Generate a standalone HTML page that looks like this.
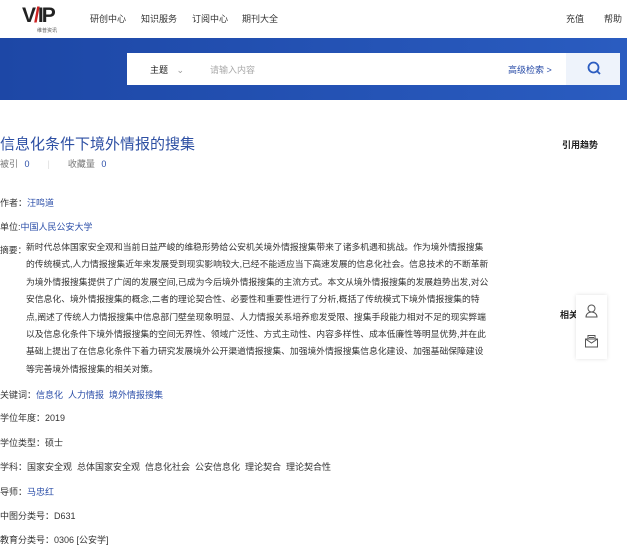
<!DOCTYPE html>
<html><head><meta charset="utf-8"><style>
*{margin:0;padding:0;box-sizing:border-box}
body{width:627px;height:543px;overflow:hidden;background:#fff;font-family:"Liberation Sans","Noto Sans CJK SC",sans-serif;font-size:9px;color:#333;position:relative}
.a{position:absolute;white-space:nowrap}
.b{color:#2b4ea8}
.hdr{position:absolute;left:0;top:0;width:627px;height:38px;background:#fff}
.band{position:absolute;left:0;top:38px;width:627px;height:62px;background:linear-gradient(90deg,#1d47a6,#2a5cc0)}
.sb{position:absolute;left:127px;top:53px;width:439px;height:32px;background:#fff}
.btn{position:absolute;left:566px;top:53px;width:54px;height:32px;background:#eef3fb}
.abs{position:absolute;left:26px;top:239px;line-height:17.4px;font-size:8.8px;color:#333;white-space:nowrap}
</style></head><body>
<div class="hdr"></div>
<div class="a" style="left:22px;top:4px;font:900 21px 'Liberation Sans',sans-serif;color:#222;letter-spacing:-2px">V<span style="color:#c22">/</span>IP</div>
<div class="a" style="left:37px;top:27px;font-size:5px;color:#555">维普资讯</div>
<div class="a" style="left:90px;top:12px">研创中心</div>
<div class="a" style="left:141px;top:12px">知识服务</div>
<div class="a" style="left:192px;top:12px">订阅中心</div>
<div class="a" style="left:242px;top:12px">期刊大全</div>
<div class="a" style="left:566px;top:12px">充值</div>
<div class="a" style="left:604px;top:12px">帮助</div>
<div class="band"></div>
<div class="sb"></div>
<div class="a" style="left:150px;top:63px;color:#222">主题 <span style="color:#999;margin-left:6px">⌄</span></div>
<div class="a" style="left:210px;top:63px;color:#aaa">请输入内容</div>
<div class="a" style="left:508px;top:63px;color:#2b4ea8">高级检索 &gt;</div>
<div class="btn"></div>
<svg class="a" style="left:587px;top:61px" width="14" height="15" viewBox="0 0 14 15"><circle cx="6.5" cy="6.5" r="5" fill="none" stroke="#2b5cc0" stroke-width="1.8"/><path d="M10 10l3 3" stroke="#2b5cc0" stroke-width="1.8"/></svg>
<div class="a" style="left:0;top:133px;font-size:15px;color:#2d4fa3">信息化条件下境外情报的搜集</div>
<div class="a" style="left:0;top:157px;color:#777">被引 <span class="b" style="margin-left:4px">0</span><span style="margin:0 18px;color:#ddd">|</span>收藏量 <span class="b" style="margin-left:4px">0</span></div>
<div class="a" style="left:562px;top:138px;font-weight:bold;color:#222">引用趋势</div>
<div class="a" style="left:0;top:196px">作者：<span class="b">汪鸣道</span></div>
<div class="a" style="left:0;top:220px">单位:<span class="b">中国人民公安大学</span></div>
<div class="a" style="left:0;top:243px;font-size:8.8px">摘要：</div>
<div class="abs">新时代总体国家安全观和当前日益严峻的维稳形势给公安机关境外情报搜集带来了诸多机遇和挑战。作为境外情报搜集<br>的传统模式,人力情报搜集近年来发展受到现实影响较大,已经不能适应当下高速发展的信息化社会。信息技术的不断革新<br>为境外情报搜集提供了广阔的发展空间,已成为今后境外情报搜集的主流方式。本文从境外情报搜集的发展趋势出发,对公<br>安信息化、境外情报搜集的概念,二者的理论契合性、必要性和重要性进行了分析,概括了传统模式下境外情报搜集的特<br>点,阐述了传统人力情报搜集中信息部门壁垒现象明显、人力情报关系培养愈发受限、搜集手段能力相对不足的现实弊端<br>以及信息化条件下境外情报搜集的空间无界性、领域广泛性、方式主动性、内容多样性、成本低廉性等明显优势,并在此<br>基础上提出了在信息化条件下着力研究发展境外公开渠道情报搜集、加强境外情报搜集信息化建设、加强基础保障建设<br>等完善境外情报搜集的相关对策。</div>
<div class="a" style="left:0;top:388px">关键词：<span class="b">信息化&nbsp; 人力情报&nbsp; 境外情报搜集</span></div>
<div class="a" style="left:0;top:411px">学位年度：2019</div>
<div class="a" style="left:0;top:436px">学位类型：硕士</div>
<div class="a" style="left:0;top:460px">学科：国家安全观&nbsp; 总体国家安全观&nbsp; 信息化社会&nbsp; 公安信息化&nbsp; 理论契合&nbsp; 理论契合性</div>
<div class="a" style="left:0;top:485px">导师：<span class="b">马忠红</span></div>
<div class="a" style="left:0;top:509px">中图分类号：D631</div>
<div class="a" style="left:0;top:533px">教育分类号：0306 [公安学]</div>
<div class="a" style="left:560px;top:308px;font-weight:bold;color:#222">相关</div>
<div class="a" style="left:576px;top:295px;width:31px;height:64px;background:#fff;box-shadow:0 0 4px rgba(0,0,0,.12)"></div>
<svg class="a" style="left:584px;top:303px" width="15" height="15" viewBox="0 0 15 15" fill="none" stroke="#555" stroke-width="1"><circle cx="7.5" cy="5.5" r="3.5"/><path d="M2 14c0-3 2.5-5 5.5-5s5.5 2 5.5 5z"/></svg>
<svg class="a" style="left:584px;top:334px" width="15" height="14" viewBox="0 0 15 14" fill="none" stroke="#555" stroke-width="1"><rect x="1.5" y="5" width="12" height="8"/><path d="M4 5V1.5h7V5M1.5 5l6 4 6-4M5 3.5h5"/></svg>
</body></html>
